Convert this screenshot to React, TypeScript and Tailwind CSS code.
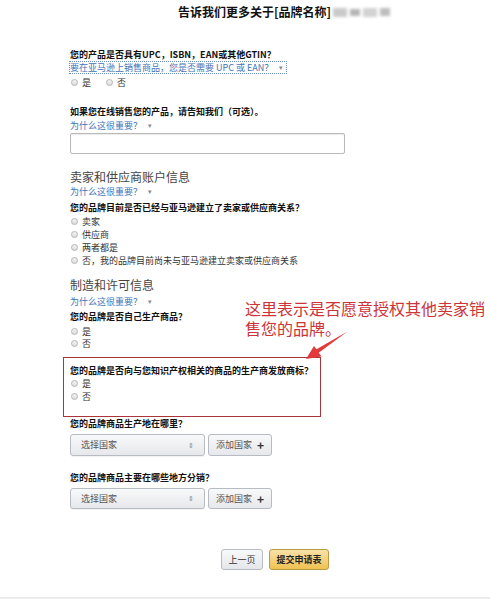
const cjk = "font-['Noto_Sans_CJK_SC','Liberation_Sans',sans-serif]";

function Radio({ label, h = "h-[13px]" }: { label: string; h?: string }) {
  return (
    <div className={`flex items-center ${h}`}>
      <span className="ml-[1px] h-[7px] w-[7px] rounded-full border border-[#b5b5b5] bg-gradient-to-b from-[#f4f4f4] to-[#dcdcdc]" />
      <span className="ml-[4px] text-[9px] leading-[13px] text-[#333]">{label}</span>
    </div>
  );
}

function Question({ children }: { children: string }) {
  return <div className="h-[13px] text-[9px] font-bold leading-[13px] text-[#111]">{children}</div>;
}

function WhyLink({ className = "" }: { className?: string }) {
  return (
    <div className={`flex h-[13px] items-center text-[9px] leading-[13px] ${className}`}>
      <span className="text-[#3f73b8]">为什么这很重要？</span>
      <span className="ml-[6px] text-[7px] text-[#888]">▾</span>
    </div>
  );
}

function CountryRow({ h }: { h: string }) {
  return (
    <div className={`flex gap-[3px] ${h}`}>
      <div className="flex w-[135px] items-center justify-between rounded-[3px] border border-[#b7bbc2] bg-gradient-to-b from-[#f8f9fa] to-[#e6e8eb] px-[10px] shadow-[0_1px_0_rgba(0,0,0,0.05)]">
        <span className="text-[9px] text-[#555]">选择国家</span>
        <span className="text-[7px] leading-none text-[#888]">⇕</span>
      </div>
      <div className="flex w-[64px] items-center justify-center gap-[5px] rounded-[3px] border border-[#b7bbc2] bg-gradient-to-b from-[#f8f9fa] to-[#e6e8eb]">
        <span className="text-[9px] text-[#555]">添加国家</span>
        <span className="text-[12px] font-bold leading-none text-[#333]">+</span>
      </div>
    </div>
  );
}

export default function App() {
  return (
    <div className={`relative flex h-[599px] w-[490px] flex-col bg-white ${cjk}`}>
      {/* title */}
      <div className="mt-[4px] flex h-[16px] items-center pl-[178px]">
        <span className="text-[12px] font-bold leading-[16px] text-[#111]">告诉我们更多关于[品牌名称]</span>
        <span className="ml-[2px] flex items-center gap-[3px] blur-[1.5px]">
          <span className="h-[9px] w-[14px] bg-[#c9c9c9]" />
          <span className="h-[7px] w-[10px] bg-[#b5b5b5]" />
          <span className="h-[9px] w-[14px] bg-[#d2d2d2]" />
          <span className="h-[8px] w-[10px] bg-[#bdbdbd]" />
        </span>
      </div>

      <div className="flex flex-col pl-[70px]">
        <div className="mt-[28px]">
          <Question>您的产品是否具有UPC，ISBN，EAN或其他GTIN？</Question>
        </div>
        <div className="-ml-[1px] flex h-[13px] w-[218px] items-center border border-dotted border-[#6b8fbf] text-[9px] leading-[11px]">
          <span className="text-[#3f73b8]">要在亚马逊上销售商品，您是否需要 UPC 或 EAN？</span>
          <span className="ml-[6px] text-[7px] text-[#888]">▾</span>
        </div>
        <div className="mt-[2px] flex gap-[14px]">
          <Radio label="是" />
          <Radio label="否" />
        </div>

        <div className="mt-[16px]">
          <Question>如果您在线销售您的产品，请告知我们（可选）。</Question>
        </div>
        <WhyLink className="mt-[1px]" />
        <div className="mt-[1px] h-[21px] w-[275px] rounded-[2px] border border-[#b9b9b9] bg-white shadow-[inset_0_1px_1px_rgba(0,0,0,0.08)]" />

        <div className="mt-[15px] h-[16px] text-[12px] leading-[16px] text-[#444]">卖家和供应商账户信息</div>
        <WhyLink />
        <div className="mt-[3px]">
          <Question>您的品牌目前是否已经与亚马逊建立了卖家或供应商关系？</Question>
        </div>
        <div className="mt-[1px] flex flex-col">
          <Radio label="卖家" />
          <Radio label="供应商" />
          <Radio label="两者都是" />
          <Radio label="否，我的品牌目前尚未与亚马逊建立卖家或供应商关系" />
        </div>

        <div className="mt-[10px] h-[16px] text-[12px] leading-[16px] text-[#444]">制造和许可信息</div>
        <WhyLink className="mt-[2px]" />
        <div className="mt-[2px]">
          <Question>您的品牌是否自己生产商品？</Question>
        </div>
        <div className="mt-[2px] flex flex-col">
          <Radio label="是" h="h-[12px]" />
          <Radio label="否" h="h-[12px]" />
        </div>

        <div className="-ml-[7px] mt-[8px] h-[60px] w-[258px] border border-[#a8353a] pl-[6px] pt-[6px]">
          <Question>您的品牌是否向与您知识产权相关的商品的生产商发放商标？</Question>
          <Radio label="是" />
          <Radio label="否" />
        </div>

        <Question>您的品牌商品生产地在哪里？</Question>
        <div className="mt-[4px]">
          <CountryRow h="h-[22px]" />
        </div>

        <div className="mt-[15px]">
          <Question>您的品牌商品主要在哪些地方分销？</Question>
        </div>
        <div className="mt-[4px]">
          <CountryRow h="h-[21px]" />
        </div>

        <div className="mt-[40px] flex gap-[6px] pl-[151px]">
          <div className="flex h-[21px] w-[42px] items-center justify-center rounded-[3px] border border-[#b7bbc2] bg-gradient-to-b from-[#f8f9fa] to-[#e4e6ea] text-[9px] text-[#333]">
            上一页
          </div>
          <div className="flex h-[21px] w-[60px] items-center justify-center rounded-[3px] border border-[#b99a45] bg-gradient-to-b from-[#f8e2a6] to-[#efc14f] text-[9px] font-bold text-[#222]">
            提交申请表
          </div>
        </div>
      </div>

      <div className="mt-auto h-[2px] w-full bg-[#ececec]" />

      {/* annotation */}
      <div className="absolute left-[245px] top-[298px] w-[245px] text-[16px] leading-[20px] text-[#cc3438]">
        这里表示是否愿意授权其他卖家销售您的品牌。
      </div>
      <svg className="pointer-events-none absolute left-0 top-0" width="490" height="599" viewBox="0 0 490 599">
        <polygon
          points="306,359 314,346 316.5,349.3 347.5,331.5 318.7,352.8 321.5,356.5"
          fill="#e23a3a"
        />
      </svg>
    </div>
  );
}
